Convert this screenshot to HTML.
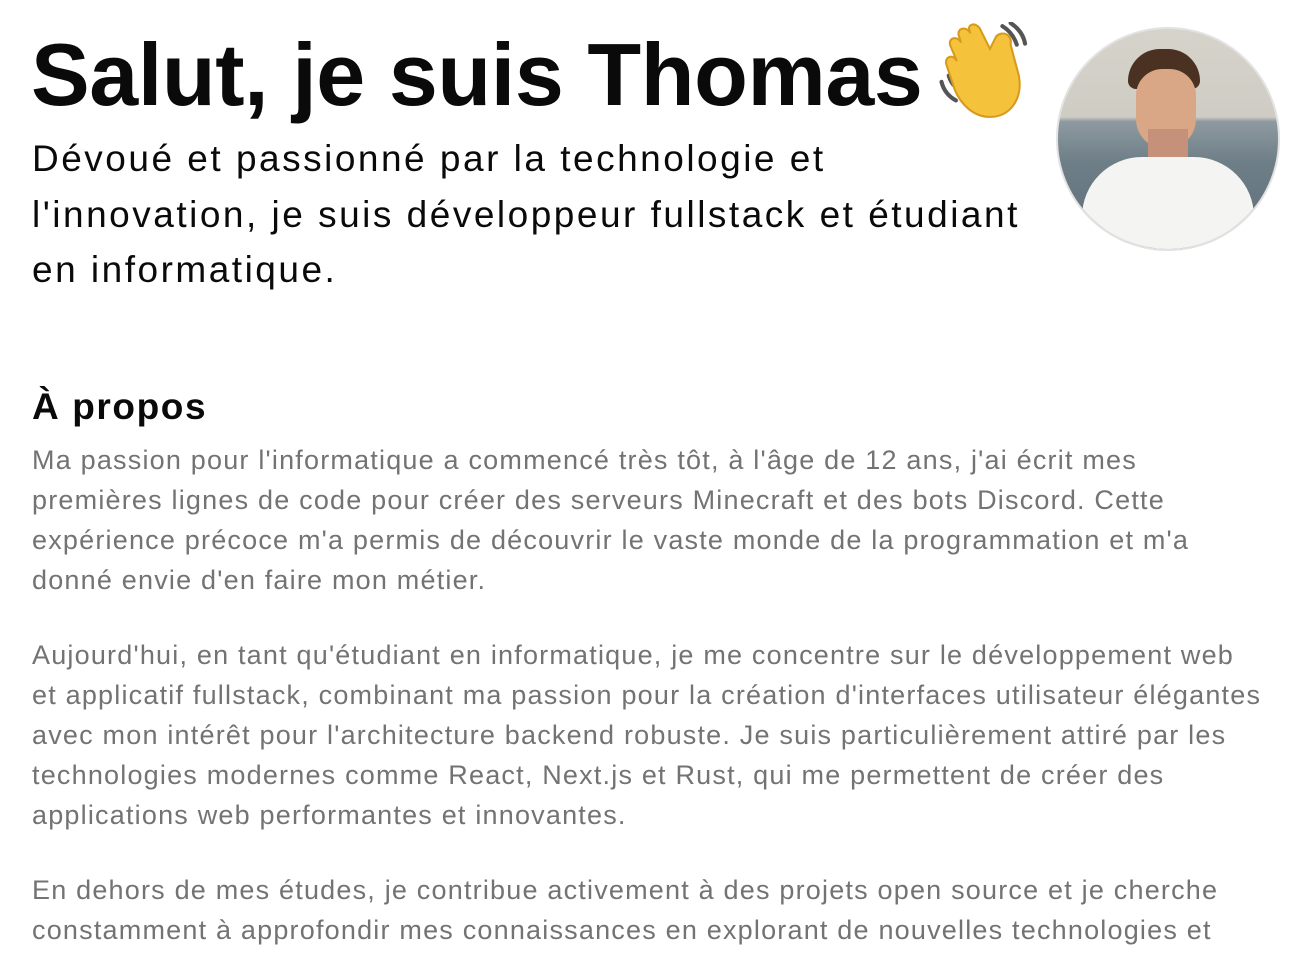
<!DOCTYPE html>
<html><head><meta charset="utf-8"><style>
body{margin:0;background:#fff;width:1300px;height:956px;overflow:hidden;font-family:"Liberation Sans",sans-serif;position:relative}
.l{position:absolute;left:32px;white-space:nowrap}
h1{position:absolute;left:31px;top:20px;margin:0;font-size:88px;font-weight:700;letter-spacing:-0.4px;color:#0a0a0a;line-height:110px;white-space:nowrap}
.sub{font-size:37px;color:#0a0a0a;line-height:56px;letter-spacing:2.5px}
h2{position:absolute;left:32px;top:386px;margin:0;font-size:37px;font-weight:700;color:#0a0a0a;letter-spacing:1.6px}
.p{font-size:27px;color:#737373;line-height:40px;letter-spacing:1.2px}
.av{position:absolute;left:1056px;top:27px;width:220px;height:220px;border-radius:50%;overflow:hidden;border:2px solid #e2e2e2;
background:linear-gradient(#d6d3cb 0%,#cfccc4 40%,#8e9aa0 42%,#6f7f88 60%,#5d6d77 100%)}
</style></head><body>
<h1>Salut, je suis Thomas</h1>
<svg style="position:absolute;left:938px;top:22px" width="106" height="98" viewBox="0 0 102 95">
<path d="M62 4 q10 6 14 18 M70 1 q12 8 14 20" stroke="#555" stroke-width="4" fill="none" stroke-linecap="round"/>
<path d="M3 58 q3 12 14 18 M10 52 q3 10 12 15" stroke="#555" stroke-width="4" fill="none" stroke-linecap="round"/>
<path d="M50 92 C34 92 22 80 16 66 L8 42 C5 34 14 30 18 38 L12 24 C8 16 18 12 22 20 L20 14 C17 6 27 3 31 11 L30 8 C28 2 36 0 40 6 L50 26 L56 14 C62 8 72 12 70 22 L78 52 C82 74 70 92 50 92Z" fill="#f5c33b" stroke="#d89a1c" stroke-width="2"/>
</svg>
<div class="av">
<div style="position:absolute;left:70px;top:20px;width:72px;height:40px;border-radius:40px 40px 10px 10px;background:#4a3122"></div>
<div style="position:absolute;left:78px;top:40px;width:60px;height:80px;border-radius:30px 30px 34px 34px;background:#d9a686"></div>
<div style="position:absolute;left:90px;top:100px;width:40px;height:36px;background:#c6917a"></div>
<div style="position:absolute;left:24px;top:128px;width:172px;height:120px;border-radius:60px 60px 0 0;background:#f4f4f2"></div>
</div>
<div class="l sub" style="top:131px">Dévoué et passionné par la technologie et</div>
<div class="l sub" style="top:187px">l'innovation, je suis développeur fullstack et étudiant</div>
<div class="l sub" style="top:242px">en informatique.</div>
<h2>À propos</h2>
<div class="l p" style="top:440px">Ma passion pour l'informatique a commencé très tôt, à l'âge de 12 ans, j'ai écrit mes</div>
<div class="l p" style="top:480px">premières lignes de code pour créer des serveurs Minecraft et des bots Discord. Cette</div>
<div class="l p" style="top:520px">expérience précoce m'a permis de découvrir le vaste monde de la programmation et m'a</div>
<div class="l p" style="top:560px">donné envie d'en faire mon métier.</div>
<div class="l p" style="top:635px">Aujourd'hui, en tant qu'étudiant en informatique, je me concentre sur le développement web</div>
<div class="l p" style="top:675px">et applicatif fullstack, combinant ma passion pour la création d'interfaces utilisateur élégantes</div>
<div class="l p" style="top:715px">avec mon intérêt pour l'architecture backend robuste. Je suis particulièrement attiré par les</div>
<div class="l p" style="top:755px">technologies modernes comme React, Next.js et Rust, qui me permettent de créer des</div>
<div class="l p" style="top:795px">applications web performantes et innovantes.</div>
<div class="l p" style="top:870px">En dehors de mes études, je contribue activement à des projets open source et je cherche</div>
<div class="l p" style="top:910px">constamment à approfondir mes connaissances en explorant de nouvelles technologies et</div>
</body></html>
